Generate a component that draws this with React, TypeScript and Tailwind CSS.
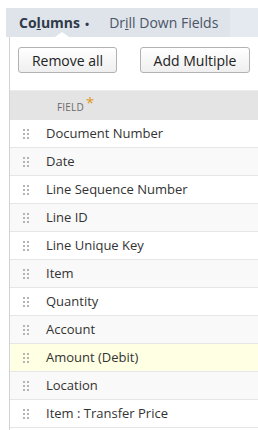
import React from 'react';

const fields = [
  'Document Number',
  'Date',
  'Line Sequence Number',
  'Line ID',
  'Line Unique Key',
  'Item',
  'Quantity',
  'Account',
  'Amount (Debit)',
  'Location',
  'Item : Transfer Price',
];

function Grip() {
  return (
    <span className="grid grid-cols-2 gap-x-[2px] gap-y-[2px] w-[6px]">
      {Array.from({ length: 6 }).map((_, i) => (
        <span key={i} className="w-[2px] h-[2px] bg-[#b4b4b4]" />
      ))}
    </span>
  );
}

export default function App() {
  return (
    <div
      className="w-[258px] h-[430px] bg-white overflow-hidden text-[#333]"
      style={{ fontFamily: '"Open Sans", "Liberation Sans", sans-serif' }}
    >
      <div className="h-[8px]" />
      {/* tab strip */}
      <div className="flex h-[29px] ml-[6px]">
        <div className="relative flex items-center w-[224px] bg-[#dfe3ea] text-[14px]">
          <span className="ml-[13px] font-bold text-[#2f3a4a]">
            Co<span className="underline">l</span>umns
            <span className="ml-[5px] text-[11px]">•</span>
          </span>
          <span className="ml-[20px] text-[#4a5566]">
            Dr<span className="underline">i</span>ll Down Fields
          </span>
          <span className="absolute left-[49px] bottom-0 w-0 h-0 border-l-[7px] border-r-[7px] border-b-[5px] border-l-transparent border-r-transparent border-b-white" />
        </div>
        <div className="flex-1 bg-[#e5e9f0]" />
      </div>

      <div className="ml-[9px] border-l border-[#d2d2d2] h-[393px] flex flex-col">
        <div className="flex gap-[23px] pl-[8px] pt-[10px]">
          <button className="w-[99px] h-[26px] rounded-[3px] border border-[#b2b2b2] bg-gradient-to-b from-white to-[#efefef] text-[14px] text-[#222]">
            Remove all
          </button>
          <button className="w-[110px] h-[26px] rounded-[3px] border border-[#b2b2b2] bg-gradient-to-b from-white to-[#efefef] text-[14px] text-[#222]">
            Add Multiple
          </button>
        </div>

        <div className="mt-[17px] h-[30px] bg-[#e4e4e4] border-t border-[#ececec] flex items-center">
          <span className="ml-[47px] text-[10px] text-[#6a6a6a] tracking-[0.2px] pt-[3px]">FIELD</span>
          <span className="ml-[2px] text-[15px] leading-none text-[#e0981a] -mt-[6px]">*</span>
        </div>

        {fields.map((f, i) => {
          const bg =
            f === 'Amount (Debit)' ? 'bg-[#ffffe3]' : i % 2 === 1 ? 'bg-[#f9f9f9]' : 'bg-white';
          return (
            <div
              key={f}
              className={`h-[28px] flex items-center border-b border-[#e6e6e6] ${bg} shrink-0`}
            >
              <span className="ml-[13px]">
                <Grip />
              </span>
              <span className="ml-[17px] text-[13px] text-[#333]">{f}</span>
            </div>
          );
        })}
      </div>
      <div className="flex h-[3px]">
        <div className="w-[244px] bg-[#56709b]" />
        <div className="w-[1px] bg-[#9fb0cc]" />
        <div className="flex-1 bg-[#56709b]" />
      </div>
    </div>
  );
}
